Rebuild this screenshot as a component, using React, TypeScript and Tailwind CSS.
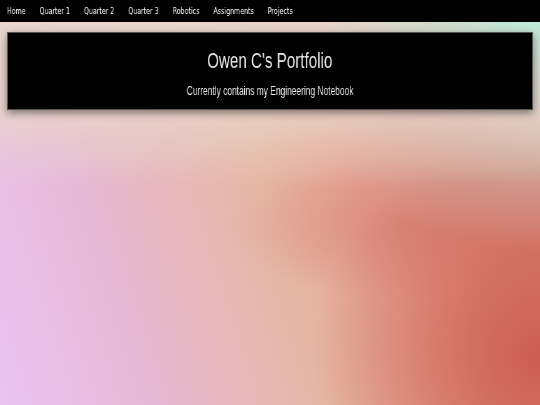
const NAV_LINKS = ['Home', 'Quarter 1', 'Quarter 2', 'Quarter 3', 'Robotics', 'Assignments', 'Projects'];

export default function App() {
  return (
    <div className="min-h-screen w-full overflow-hidden bg-[radial-gradient(ellipse_40%_28%_at_100%_2%,rgba(184,238,222,1)_0%,rgba(190,226,210,0.6)_45%,rgba(190,226,210,0)_100%),linear-gradient(to_bottom,rgba(232,216,206,0.95)_0%,rgba(232,214,204,0.8)_28%,rgba(232,214,204,0)_46%),radial-gradient(ellipse_38%_30%_at_100%_32%,rgba(200,176,164,0.95)_0%,rgba(200,176,164,0)_100%),radial-gradient(ellipse_42%_55%_at_100%_88%,rgba(204,94,82,1)_0%,rgba(204,94,82,0.6)_40%,rgba(204,94,82,0)_100%),radial-gradient(ellipse_34%_18%_at_76%_56%,rgba(212,122,112,0.6)_0%,rgba(212,122,112,0)_100%),linear-gradient(72deg,#ebc3f1_0%,#e6b9d6_22%,#e6b8b4_40%,#e5b6a2_50%,#e4a292_64%,#dd8a7c_82%,#d87c70_100%)]">
      <nav className="h-[22px] bg-black overflow-hidden">
        <ul className="flex h-full origin-left scale-x-[0.7] w-[800px] items-center will-change-transform">
          {NAV_LINKS.map((label) => (
            <li key={label}>
              <a
                href="#"
                className="block px-[10px] text-[9px] leading-[22px] text-white antialiased font-['DejaVu_Sans',sans-serif]"
              >
                {label}
              </a>
            </li>
          ))}
        </ul>
      </nav>

      <header className="mx-[7px] mt-[10px] h-[78px] bg-black border border-[#555] shadow-[0_3px_8px_rgba(0,0,0,0.45)] flex flex-col items-center text-[#e6e6e6] antialiased font-['Liberation_Sans',Arial,sans-serif]">
        <h1 className="mt-[15px] text-[22px] leading-[26px] whitespace-nowrap scale-x-[0.69] will-change-transform">
          Owen C's Portfolio
        </h1>
        <p className="mt-[10px] text-[12px] leading-[14px] whitespace-nowrap scale-x-[0.7] will-change-transform">
          Currently contains my Engineering Notebook
        </p>
      </header>
    </div>
  );
}
